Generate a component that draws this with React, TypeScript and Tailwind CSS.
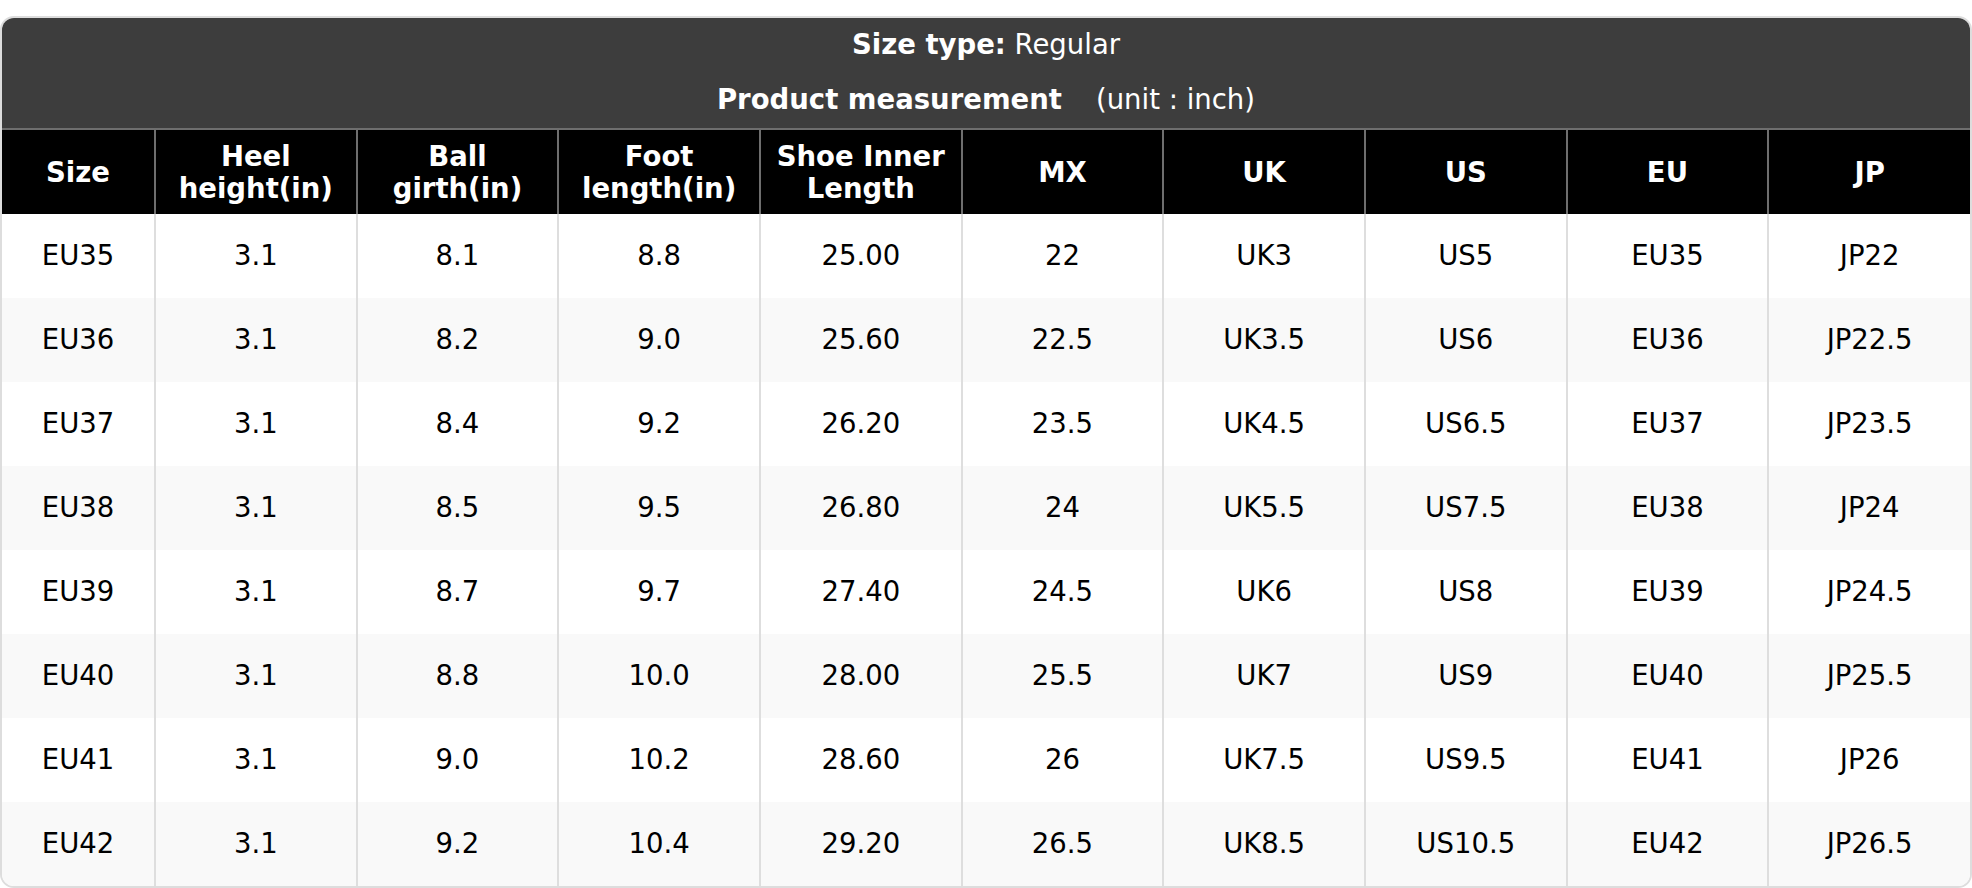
import React from 'react';

const headers: string[][] = [
  ['Size'],
  ['Heel', 'height(in)'],
  ['Ball', 'girth(in)'],
  ['Foot', 'length(in)'],
  ['Shoe Inner', 'Length'],
  ['MX'],
  ['UK'],
  ['US'],
  ['EU'],
  ['JP'],
];

const rows: string[][] = [
  ['EU35', '3.1', '8.1', '8.8', '25.00', '22', 'UK3', 'US5', 'EU35', 'JP22'],
  ['EU36', '3.1', '8.2', '9.0', '25.60', '22.5', 'UK3.5', 'US6', 'EU36', 'JP22.5'],
  ['EU37', '3.1', '8.4', '9.2', '26.20', '23.5', 'UK4.5', 'US6.5', 'EU37', 'JP23.5'],
  ['EU38', '3.1', '8.5', '9.5', '26.80', '24', 'UK5.5', 'US7.5', 'EU38', 'JP24'],
  ['EU39', '3.1', '8.7', '9.7', '27.40', '24.5', 'UK6', 'US8', 'EU39', 'JP24.5'],
  ['EU40', '3.1', '8.8', '10.0', '28.00', '25.5', 'UK7', 'US9', 'EU40', 'JP25.5'],
  ['EU41', '3.1', '9.0', '10.2', '28.60', '26', 'UK7.5', 'US9.5', 'EU41', 'JP26'],
  ['EU42', '3.1', '9.2', '10.4', '29.20', '26.5', 'UK8.5', 'US10.5', 'EU42', 'JP26.5'],
];

export default function App() {
  return (
    <div className="bg-white pt-[16px] font-['DejaVu_Sans',sans-serif] text-[27.5px]">
      <div className="overflow-hidden rounded-[14px] border-2 border-[#dddddd]">
        {/* titre */}
        <div className="bg-[#3d3d3d] text-white">
          <div className="flex h-[54px] items-center justify-center">
            <span className="font-bold">Size type:</span>
            <span>&nbsp;Regular</span>
          </div>
          <div className="flex h-[56px] items-center justify-center">
            <span className="font-bold">Product measurement</span>
            <span className="ml-[34px]">(unit : inch)</span>
          </div>
        </div>

        <table className="w-full table-fixed border-collapse text-center">
          <colgroup>
            <col className="w-[153px]" />
            {headers.slice(1).map((_, i) => (
              <col key={i} />
            ))}
          </colgroup>
          <thead>
            <tr className="h-[85px] border-t-2 border-[#6e6e6e] bg-black text-white">
              {headers.map((h, i) => (
                <th
                  key={i}
                  className={`px-1 font-bold leading-[32px] ${i > 0 ? 'border-l-2 border-[#6e6e6e]' : ''}`}
                >
                  {h.map((line, j) => (
                    <div key={j}>{line}</div>
                  ))}
                </th>
              ))}
            </tr>
          </thead>
          <tbody>
            {rows.map((r, ri) => (
              <tr key={ri} className={`h-[84px] ${ri % 2 === 1 ? 'bg-[#f9f9f9]' : 'bg-white'}`}>
                {r.map((c, ci) => (
                  <td
                    key={ci}
                    className={`text-black ${ci > 0 ? 'border-l-2 border-[#dedede]' : ''}`}
                  >
                    {c}
                  </td>
                ))}
              </tr>
            ))}
          </tbody>
        </table>
      </div>
    </div>
  );
}
